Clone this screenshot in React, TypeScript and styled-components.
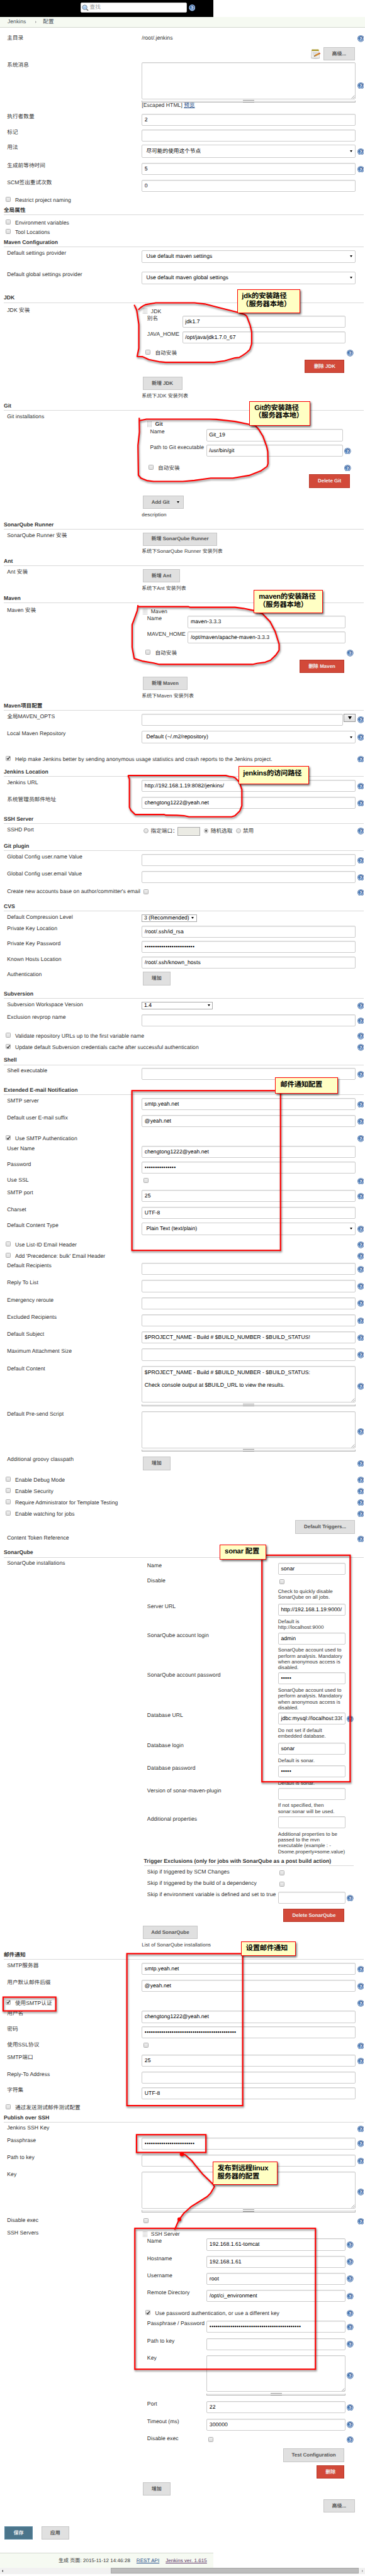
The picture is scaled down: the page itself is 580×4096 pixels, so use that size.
import React from "react";
import styled, { createGlobalStyle, css } from "styled-components";

const SCALE = 580 / 873;
const u = (n: number) => `${(n * SCALE).toFixed(3)}px`;

const Global = createGlobalStyle`
  * { box-sizing: border-box; }
  body {
    margin: 0;
    background: #fff;
    color: #333;
    font-family: "Liberation Sans", "Noto Sans CJK SC", sans-serif;
    font-size: ${u(13)};
    line-height: ${u(14)};
    letter-spacing: ${u(0.045)};
    text-rendering: geometricPrecision;
  }
`;

const Page = styled.div`
  position: relative;
  width: 580px;
  height: 4096px;
  overflow: hidden;
  background: #fff;
  white-space: nowrap;
`;

/* ---------- top bars ---------- */

const TopBar = styled.header`
  display: flex;
  align-items: flex-start;
  width: ${u(510)};
  height: ${u(40)};
  padding: ${u(6)} 0 0 ${u(192)};
  background: #000;
`;

const SearchBox = styled.div`
  display: flex;
  align-items: center;
  gap: ${u(3)};
  width: ${u(255)};
  height: ${u(24)};
  margin-right: ${u(4)};
  padding-left: ${u(2)};
  border: 1px solid #ccc;
  border-radius: ${u(3)};
  background: #fff;
  color: #999;
`;

const TopHelp = styled.div`
  padding-top: ${u(5)};
`;

const Crumbs = styled.nav`
  display: flex;
  align-items: center;
  height: ${u(26)};
  padding-left: ${u(18)};
  border-bottom: 1px solid #d3d7cf;
  background: #f6faf2;
  color: #4d545d;
`;

const CrumbArrow = styled.span`
  width: 0;
  height: 0;
  margin: 0 ${u(15.5)} 0 ${u(22)};
  border-left: ${u(4)} solid #aaa;
  border-top: ${u(4)} solid transparent;
  border-bottom: ${u(4)} solid transparent;
`;

/* ---------- form skeleton ---------- */

const Form = styled.main`
  width: ${u(870.5)};
  height: ${u(6044)};
  padding-top: ${u(18.5)};
`;

const Heading = styled.h2<{ $h?: number; $left?: number }>`
  height: ${(p) => u(p.$h ?? 27)};
  margin: 0 0 0 ${(p) => u(p.$left ?? 9)};
  font-size: ${u(13)};
  font-weight: bold;
  letter-spacing: ${u(0.03)};
  line-height: ${u(16)};
  &::after {
    content: "";
    display: block;
    height: 1px;
    margin-top: ${u(2.5)};
    background: #d9d9d9;
  }
`;

const RowBox = styled.div<{ $h: number }>`
  display: flex;
  align-items: flex-start;
  height: ${(p) => u(p.$h)};
`;

const Label = styled.div<{ $w: number; $pad: number }>`
  flex: none;
  width: ${(p) => u(p.$w)};
  padding-left: ${(p) => u(p.$pad)};
`;

const Control = styled.div`
  flex: 1;
  min-width: 0;
`;

const HelpCell = styled.div<{ $top: number }>`
  display: flex;
  justify-content: flex-end;
  flex: none;
  width: ${u(19.5)};
  padding-top: ${(p) => u(p.$top)};
`;

const CheckLine = styled.div<{ $h: number; $pad: number }>`
  display: flex;
  align-items: flex-start;
  height: ${(p) => u(p.$h)};
  padding-left: ${(p) => u(p.$pad)};
  line-height: ${u(16)};
`;

const CheckText = styled.span`
  flex: 1;
  padding-left: ${u(11)};
`;

const Group = styled.div<{ $w?: number; $top?: number }>`
  width: ${(p) => u(p.$w ?? 507)};
  padding-top: ${(p) => u(p.$top ?? 0)};
`;

const GroupTitle = styled.div<{ $pad?: number; $bold?: boolean; $h?: number }>`
  display: flex;
  align-items: center;
  gap: ${u(7)};
  height: ${(p) => u(p.$h ?? 20)};
  padding-left: ${(p) => u(p.$pad ?? 3)};
  font-weight: ${(p) => (p.$bold ? "bold" : "normal")};
`;

const DragHandle = styled.i`
  flex: none;
  width: 8px;
  height: 10px;
  background-image: linear-gradient(90deg, transparent 50%, #fff 50%), linear-gradient(#aaa 50%, #fff 50%);
  background-size: 2px 2px;
`;

/* ---------- controls ---------- */

const frame = css`
  border: 1px solid #ccc;
  border-radius: ${u(3)};
  background: #fff;
  color: #000;
`;

const Input = styled.div`
  ${frame}
  height: ${u(28.8)};
  padding: 0 ${u(5.5)};
  line-height: ${u(26)};
  box-shadow: inset 0 1px 1px rgba(0, 0, 0, 0.07);
`;

const InputText = styled.div`
  overflow: hidden;
`;

const Dots = styled.span`
  letter-spacing: ${u(0.43)};
`;

const SelectBox = styled.div`
  ${frame}
  display: flex;
  align-items: center;
  justify-content: space-between;
  height: ${u(30.5)};
  padding: 0 ${u(6.5)} 0 ${u(9.5)};
`;

const MiniSelect = styled.div<{ $w: number }>`
  display: flex;
  align-items: center;
  justify-content: space-between;
  width: ${(p) => u(p.$w)};
  height: ${u(19)};
  padding: 0 ${u(6)} 0 ${u(4)};
  border: 1px solid #a9a9a9;
  background: #fff;
  color: #000;
`;

const Caret = styled.i<{ $s?: number }>`
  width: 0;
  height: 0;
  border-top: ${(p) => u((p.$s ?? 1) * 6)} solid #000;
  border-left: ${(p) => u((p.$s ?? 1) * 3.4)} solid transparent;
  border-right: ${(p) => u((p.$s ?? 1) * 3.4)} solid transparent;
`;

const Area = styled.div`
  ${frame}
  position: relative;
  height: ${u(88.5)};
  padding: ${u(6)} ${u(5.5)};
  line-height: ${u(15.15)};
  white-space: pre;
  box-shadow: inset 0 1px 1px rgba(0, 0, 0, 0.07);
`;

const AreaCorner = styled.svg`
  position: absolute;
  right: 0;
  bottom: 0;
  width: ${u(9)};
  height: ${u(9)};
`;

const AreaBar = styled.div`
  display: flex;
  align-items: center;
  justify-content: center;
  height: ${u(5)};
  margin-top: ${u(3.5)};
  border-left: 1px solid #bbb;
  border-right: 1px solid #bbb;
  border-bottom: 1px solid #b3b3b3;
  background: #eee;
  &::after {
    content: "";
    width: ${u(27)};
    height: ${u(3)};
    border-top: 1px solid #999;
    border-bottom: 1px solid #888;
  }
`;

const tones = {
  plain: { bg: "#e0e0e0", line: "#c6c6c6", text: "#555" },
  danger: { bg: "#d24939", line: "#b9382a", text: "#eee" },
  primary: { bg: "#4b758b", line: "#5c8aa3", text: "#eee" },
};

const Button = styled.div<{ $w: number; $tone?: keyof typeof tones }>`
  display: flex;
  flex: none;
  align-items: center;
  justify-content: center;
  gap: ${u(18)};
  width: ${(p) => u(p.$w)};
  height: ${u(32)};
  border: 1px solid ${(p) => tones[p.$tone ?? "plain"].line};
  background: ${(p) => tones[p.$tone ?? "plain"].bg};
  color: ${(p) => tones[p.$tone ?? "plain"].text};
  font-size: ${u(12)};
  font-weight: bold;
  letter-spacing: ${u(-0.02)};
`;

const AddButton = styled(Button)`
  margin-left: ${u(2)};
`;

const MenuText = styled.span`
  padding-left: ${u(11)};
`;

const ButtonLine = styled.div<{ $h: number; $right: number }>`
  display: flex;
  justify-content: flex-end;
  gap: ${u(6)};
  height: ${(p) => u(p.$h)};
  padding-right: ${(p) => u(p.$right)};
`;

const NotepadSlot = styled.span`
  padding-top: ${u(5)};
`;

const Note = styled.div<{ $top?: number }>`
  padding-top: ${(p) => u(p.$top ?? 7)};
  font-size: ${u(12)};
  letter-spacing: ${u(0.09)};
  line-height: ${u(14.1)};
`;

const Box = styled.span<{ $indent?: boolean }>`
  position: relative;
  display: block;
  flex: none;
  width: ${u(12)};
  height: ${u(12)};
  margin: ${(p) => (p.$indent ? `${u(2.5)} 0 0 ${u(4)}` : "0")};
  border: 1px solid #b0b0b0;
  border-radius: ${u(2)};
  background: linear-gradient(#f0f0f0, #dcdcdc);
  svg {
    position: absolute;
    left: 0;
    top: ${u(-1)};
    width: ${u(10)};
    height: ${u(10)};
  }
`;

const Radio = styled.span<{ $on?: boolean }>`
  flex: none;
  width: ${u(12)};
  height: ${u(12)};
  margin-top: ${u(-4)};
  border: 1px solid #b0b0b0;
  border-radius: 50%;
  background: ${(p) =>
    p.$on
      ? "radial-gradient(circle, #555 38%, #e6e6e6 46%)"
      : "linear-gradient(#eee, #ddd)"};
`;

const RadioLine = styled.div`
  display: flex;
  align-items: center;
  height: ${u(22)};
  padding-left: ${u(4.5)};
`;

const RadioText = styled.span<{ $w: number }>`
  width: ${(p) => u(p.$w)};
  padding-left: ${u(5)};
`;

const PortField = styled.span`
  width: ${u(54)};
  height: ${u(21)};
  margin-right: ${u(9)};
  border: 1px solid #aaa;
  background: #ebebe4;
`;

const Combo = styled.div`
  display: flex;
  align-items: flex-start;
  gap: ${u(1)};
  > :first-child { flex: 1; }
`;

const ComboButton = styled.div`
  display: flex;
  align-items: center;
  justify-content: center;
  width: ${u(29)};
  height: ${u(20.5)};
  border: 1px solid #999;
  background: linear-gradient(#f4f4f4, #dedede);
`;

const Link = styled.a<{ $c?: string }>`
  color: ${(p) => p.$c ?? "#204a87"};
  text-decoration: underline;
`;

/* ---------- page bottom ---------- */

const SaveBar = styled.div`
  display: flex;
  gap: ${u(21)};
  padding: ${u(33)} 0 0 ${u(11)};
`;

const Footer = styled.footer`
  display: flex;
  align-items: center;
  justify-content: flex-end;
  gap: ${u(15)};
  width: ${u(510)};
  height: ${u(35)};
  padding-right: ${u(15)};
  border-top: 1px solid #d3d7cf;
  background: #f6faf2;
  font-size: ${u(12)};
  letter-spacing: ${u(0.12)};
`;

const Scrollbar = styled.div`
  display: flex;
  align-items: center;
  justify-content: space-between;
  height: ${u(16.2)};
  padding: 0 ${u(5)};
  background: #f1f1f1;
`;

const ScrollArrow = styled.i<{ $right?: boolean }>`
  width: 0;
  height: 0;
  border-top: ${u(4)} solid transparent;
  border-bottom: ${u(4)} solid transparent;
  ${(p) => (p.$right ? `border-left: ${u(4)} solid #a3a3a3;` : `border-right: ${u(4)} solid #404040;`)}
`;

const Thumb = styled.span`
  width: ${u(593)};
  height: ${u(13.5)};
  margin: 0 ${u(7)} 0 auto;
  border: 1px solid #a8a8a8;
  background: #bcbcbc;
`;

/* ---------- annotations floating above the form ---------- */

const Sketch = styled.svg`
  position: absolute;
  left: 0;
  top: 0;
  width: 580px;
  height: 4096px;
  pointer-events: none;
  filter: drop-shadow(1.5px 2px 1.5px rgba(0, 0, 0, 0.5));
`;

const Sticky = styled.div<{ $x: number; $y: number; $w: number; $h: number; $px: number; $py: number }>`
  position: absolute;
  left: ${(p) => u(p.$x)};
  top: ${(p) => u(p.$y)};
  width: ${(p) => u(p.$w)};
  height: ${(p) => u(p.$h)};
  padding: ${(p) => u(p.$py - 2.5)} 0 0 ${(p) => u(p.$px - 2.5)};
  border: ${u(3)} solid #f00;
  background: #ffffc4;
  box-shadow: 1.5px 2px 3px rgba(0, 0, 0, 0.6);
  color: #000;
  font-size: ${u(17)};
  font-weight: 600;
  letter-spacing: ${u(-0.28)};
  line-height: ${u(19)};
  white-space: pre;
`;

/* ---------- icons ---------- */

const IconSvg = styled.svg<{ $w: number; $h: number }>`
  display: block;
  flex: none;
  width: ${(p) => u(p.$w)};
  height: ${(p) => u(p.$h)};
`;

const HelpIcon = () => (
  <IconSvg $w={16} $h={16} viewBox="0 0 16 16">
    <circle cx="8" cy="8" r="8" fill="#3d68a3" />
    <circle cx="8" cy="8" r="6.4" fill="#5b87c0" stroke="#eef3f9" strokeWidth="1.1" />
    <path d="M2.200 8.500a5.900 5.900 0 0 1 11.600-1.600C10 6.500 6 8 2.200 8.500z" fill="#2c5794" />
    <text x="8" y="12" textAnchor="middle" fontSize="11" fontWeight="bold" fill="#fff" fontFamily="Liberation Sans" letterSpacing="0">?</text>
  </IconSvg>
);

const SearchIcon = () => (
  <IconSvg $w={16} $h={16} viewBox="0 0 16 16">
    <path d="M10.500 10.500l4 4" stroke="#777" strokeWidth="2.600" strokeLinecap="round" />
    <circle cx="7" cy="7" r="5.600" fill="#a9cbef" stroke="#7f8a94" strokeWidth="1.500" />
    <path d="M3.600 6.400a3.600 3.600 0 0 1 5-2.600C7.600 5.200 5.600 6 3.600 6.400z" fill="#dcecfb" />
  </IconSvg>
);

const NotepadIcon = () => (
  <IconSvg $w={23} $h={24} viewBox="0 0 23 24">
    <ellipse cx="11" cy="22" rx="10" ry="1.600" fill="#ccc" />
    <path d="M2 3h17l1.500 18.500H.8z" fill="#f1f1ef" stroke="#aaa" strokeWidth=".8" />
    <path d="M2 1h17v3.500H2z" fill="#b9a52e" />
    <path d="M4 1v3M7 1v3M10 1v3M13 1v3M16 1v3" stroke="#7e701c" strokeWidth=".9" />
    <path d="M4.500 8h12M4.500 11h9M4.500 14h5" stroke="#bbb" strokeWidth="1" />
    <path d="M7.500 17.500l3-3.500L20 9l2 2.400-9.800 5z" fill="#e8942c" stroke="#8c5511" strokeWidth=".7" />
    <path d="M19.600 9.200l1.400-.7 1.900 2.300-1.200.9z" fill="#d33" />
    <path d="M7.500 17.500l1.600-1.900 1.400 1.200z" fill="#222" />
  </IconSvg>
);

/* ---------- composed parts ---------- */

const Check = ({ on, indent }: { on?: boolean; indent?: boolean }) => (
  <Box $indent={indent}>
    {on && (
      <svg viewBox="0 0 10 10">
        <path d="M1.800 5.600l2.200 2.600L8.600 1.600" fill="none" stroke="#333" strokeWidth="2" />
      </svg>
    )}
  </Box>
);

type EntryProps = {
  h: number;
  label?: string;
  lw?: number;
  pad?: number;
  help?: number;
  children?: React.ReactNode;
};

const Entry = ({ h, label, lw = 339, pad = 17, help, children }: EntryProps) => (
  <RowBox $h={h}>
    <Label $w={lw} $pad={pad}>{label}</Label>
    <Control>{children}</Control>
    <HelpCell $top={help ?? 0}>{help !== undefined && <HelpIcon />}</HelpCell>
  </RowBox>
);

type TextProps = Omit<EntryProps, "help" | "children"> & {
  v?: string;
  dots?: number;
  help?: boolean;
  note?: React.ReactNode;
};

const Text = ({ v, dots, help, note, ...rest }: TextProps) => (
  <Entry {...rest} help={help ? 7 : undefined}>
    <Input>
      <InputText>{dots ? <Dots>{"•".repeat(dots)}</Dots> : v}</InputText>
    </Input>
    {note && <Note>{note}</Note>}
  </Entry>
);

const Select = ({ v, help, ...rest }: Omit<TextProps, "dots" | "note">) => (
  <Entry {...rest} help={help ? 8 : undefined}>
    <SelectBox>
      {v}
      <Caret />
    </SelectBox>
  </Entry>
);

const Textarea = ({ children }: { children?: React.ReactNode }) => (
  <>
    <Area>
      {children}
      <AreaCorner viewBox="0 0 9 9">
        <path d="M1 8.500L8 1M5 8.500L8.500 5" stroke="#777" strokeWidth="1" />
      </AreaCorner>
    </Area>
    <AreaBar />
  </>
);

type CheckRowProps = { h: number; on?: boolean; pad?: number; help?: boolean; children: string };

const CheckRow = ({ h, on, pad = 13, help, children }: CheckRowProps) => (
  <CheckLine $h={h} $pad={pad}>
    <Check on={on} />
    <CheckText>{children}</CheckText>
    {help && <HelpIcon />}
  </CheckLine>
);

const accountNote = (
  <>
    SonarQube account used to<br />perform analysis. Mandatory<br />when anonymous access is<br />disabled.
  </>
);

/* Label columns of the nested SonarQube and SSH server groups. */
const sonarCol = { lw: 326, pad: 13 };
const sshCol = { lw: 155, pad: 13 };

const loops = [
  "M321 729L327 742L332 776L332 833L328 852.500L341 853L356 860L380 865L396 866.500L512 866.500L537 863L562 856L572 855Q584 848 590 843L597.500 836L602 822L602 794L598 777L590 756L584.600 752L565 746L526 736.400L490 727L465 724.300L373 724.300L348 728.600Q337 733 331 741",
  "M333 999L333.500 1033L330 1065L331 1136.400L337 1143.600L351 1149.300L367.500 1151.400L437 1151.400L465 1149L504 1143.600L557 1143.600L596 1137L623.600 1126.400L638.700 1115.700L641 1108.600L640.400 1080L638 1068.600L629 1043.600L618 1025.700L611 1018.600L596 1015L562 1008L518 1003L501 1002.500L350 1002.500L333 1006.400",
  "M330 1447L328.500 1460L320 1483.600L316 1494L316 1548L321 1575L340 1581L367.500 1585.700L381 1589L604 1589L615 1586.400L634 1584L647 1579L660 1566.400L667.600 1555L667.600 1540.700L658 1510L646 1487L628 1468L606 1460L582 1455L562 1452.500L454 1452.500L451 1451L330 1451",
  "M306 1854.600L309.600 1863L309.600 1930.700L313 1938L323 1948L392.500 1948L396 1949.600L423 1950L440 1951L452 1953.600L554 1953.600L562 1951L573.500 1939.600L578.500 1927L578.500 1888L572 1870L562 1860L557 1858L548 1857L540 1854.600L306 1854.600",
  "M435 5152L443 5153.600L459 5168L468 5179.600L484 5199L509 5223.600L513 5229.600L504 5245L495.600 5253.600L456.600 5278L440 5293L429 5308L426 5313.600L417.600 5333",
];

const frames: [number, number, number, number][] = [
  [315.5, 2608.5, 355.5, 382],
  [626.5, 3719.5, 211, 542],
  [303.5, 4672.5, 277, 363.5],
  [7.5, 4776.5, 126, 33],
  [326.5, 5105.5, 166, 42.5],
  [322.5, 5329.5, 432, 337],
];

const stickies: [number, number, number, number, number, number, string][] = [
  [567, 693, 151, 56, 12.5, 8.5, "jdk的安装路径\n（服务器本地）"],
  [596, 960, 146, 59, 13.5, 8.5, "Git的安装路径\n（服务器本地）"],
  [607, 1412, 165, 55, 13, 8.5, "maven的安装路径\n（服务器本地）"],
  [570, 1834, 169, 43, 12.5, 9, "jenkins的访问路径"],
  [658, 2579, 151, 39, 13.5, 9, "邮件通知配置"],
  [525, 3696, 111, 37, 13.5, 9, "sonar 配置"],
  [576, 4646, 131, 35, 13, 9, "设置邮件通知"],
  [508, 5173, 156, 56, 13, 9, "发布到远程linux\n服务器的配置"],
];

export default function App() {
  return (
    <Page>
      <Global />
      <TopBar>
        <SearchBox>
          <SearchIcon />
          查找
        </SearchBox>
        <TopHelp>
          <HelpIcon />
        </TopHelp>
      </TopBar>
      <Crumbs>
        Jenkins
        <CrumbArrow />
        配置
      </Crumbs>

      <Form>
        <Entry h={28.5} label="主目录" help={0.5}>/root/.jenkins</Entry>
        <ButtonLine $h={36} $right={21.5}>
          <NotepadSlot>
            <NotepadIcon />
          </NotepadSlot>
          <Button $w={76}>高级...</Button>
        </ButtonLine>
        <Entry h={124} label="系统消息" help={48}>
          <Textarea />
          [Escaped HTML] <Link>预览</Link>
        </Entry>
        <Text h={37} label="执行者数量" v="2" />
        <Text h={37} label="标记" />
        <Select h={43} label="用法" v="尽可能的使用这个节点" help />
        <Text h={41} label="生成前等待时间" v="5" help />
        <Text h={40} label="SCM签出重试次数" v="0" />
        <CheckRow h={24}>Restrict project naming</CheckRow>

        <Heading $h={30}>全局属性</Heading>
        <CheckRow h={23}>Environment variables</CheckRow>
        <CheckRow h={24}>Tool Locations</CheckRow>

        <Heading>Maven Configuration</Heading>
        <Select h={51} label="Default settings provider" v="Use default maven settings" />
        <Select h={55} label="Default global settings provider" v="Use default maven global settings" />

        <Heading $h={31}>JDK</Heading>
        <Entry h={227.4} label="JDK 安装">
          <Group>
            <GroupTitle>
              <DragHandle />
              JDK
            </GroupTitle>
            <Text h={37} lw={97} pad={13} label="别名" v="jdk1.7" />
            <Text h={44} lw={97} pad={13} label="JAVA_HOME" v="/opt/java/jdk1.7.0_67" />
            <CheckRow h={24} pad={9} help>自动安装</CheckRow>
            <ButtonLine $h={41} $right={22}>
              <Button $w={95} $tone="danger">删除 JDK</Button>
            </ButtonLine>
          </Group>
          <AddButton $w={95}>新增 JDK</AddButton>
          <Note>系统下JDK 安装列表</Note>
        </Entry>

        <Heading>Git</Heading>
        <Entry h={257} label="Git installations">
          <Group $w={501} $top={14}>
            <GroupTitle $pad={13} $bold $h={23}>
              <DragHandle />
              Git
            </GroupTitle>
            <Text h={37} lw={154} pad={20} label="Name" v="Git_19" />
            <Text h={47.5} lw={154} pad={20} label="Path to Git executable" v="/usr/bin/git" help />
            <CheckRow h={24} pad={16} help>自动安装</CheckRow>
            <ButtonLine $h={50} $right={3}>
              <Button $w={98} $tone="danger">Delete Git</Button>
            </ButtonLine>
          </Group>
          <AddButton $w={99}>
            <MenuText>Add Git</MenuText>
            <Caret />
          </AddButton>
          <Note>description</Note>
        </Entry>

        <Heading>SonarQube Runner</Heading>
        <Entry h={61.2} label="SonarQube Runner 安装">
          <AddButton $w={179}>新增 SonarQube Runner</AddButton>
          <Note>系统下SonarQube Runner 安装列表</Note>
        </Entry>

        <Heading>Ant</Heading>
        <Entry h={60.8} label="Ant 安装">
          <AddButton $w={90}>新增 Ant</AddButton>
          <Note>系统下Ant 安装列表</Note>
        </Entry>

        <Heading $h={31}>Maven</Heading>
        <Entry h={226.9} label="Maven 安装">
          <Group>
            <GroupTitle>
              <DragHandle />
              Maven
            </GroupTitle>
            <Text h={37} lw={110} pad={13} label="Name" v="maven-3.3.3" />
            <Text h={43.6} lw={110} pad={13} label="MAVEN_HOME" v="/opt/maven/apache-maven-3.3.3" />
            <CheckRow h={24} pad={9} help>自动安装</CheckRow>
            <ButtonLine $h={41} $right={22}>
              <Button $w={108} $tone="danger">删除 Maven</Button>
            </ButtonLine>
          </Group>
          <AddButton $w={108}>新增 Maven</AddButton>
          <Note>系统下Maven 安装列表</Note>
        </Entry>

        <Heading>Maven项目配置</Heading>
        <Entry h={41} label="全局MAVEN_OPTS" help={7}>
          <Combo>
            <Input />
            <ComboButton>
              <Caret $s={1.4} />
            </ComboButton>
          </Combo>
        </Entry>
        <Select h={60} label="Local Maven Repository" v="Default (~/.m2/repository)" help />
        <CheckRow h={30.2} on help>
          Help make Jenkins better by sending anonymous usage statistics and crash reports to the Jenkins project.
        </CheckRow>

        <Heading>Jenkins Location</Heading>
        <Text h={41} label="Jenkins URL" v="http://192.168.1.19:8082/jenkins/" help />
        <Text h={44.8} label="系统管理员邮件地址" v="chengtong1222@yeah.net" help />

        <Heading>SSH Server</Heading>
        <Entry h={38} label="SSHD Port" help={2}>
          <RadioLine>
            <Radio />
            <RadioText $w={68.5}>指定端口：</RadioText>
            <PortField />
            <Radio $on />
            <RadioText $w={65}>随机选取</RadioText>
            <Radio />
            <RadioText $w={40}>禁用</RadioText>
          </RadioLine>
        </Entry>

        <Heading>Git plugin</Heading>
        <Text h={41} label="Global Config user.name Value" help />
        <Text h={41.2} label="Global Config user.email Value" help />
        <Entry h={34.8} label="Create new accounts base on author/committer's email" help={1.5}>
          <Check indent />
        </Entry>

        <Heading>CVS</Heading>
        <Entry h={27.2} label="Default Compression Level">
          <MiniSelect $w={132.5}>
            3 (Recommended)
            <Caret />
          </MiniSelect>
        </Entry>
        <Text h={37} label="Private Key Location" v="/root/.ssh/id_rsa" />
        <Text h={37} label="Private Key Password" dots={24} />
        <Text h={37} label="Known Hosts Location" v="/root/.ssh/known_hosts" />
        <Entry h={44} label="Authentication">
          <AddButton $w={67}>增加</AddButton>
        </Entry>

        <Heading>Subversion</Heading>
        <Entry h={31} label="Subversion Workspace Version" help={2}>
          <MiniSelect $w={170.5}>
            1.4
            <Caret />
          </MiniSelect>
        </Entry>
        <Text h={44} label="Exclusion revprop name" help />
        <CheckRow h={27.2} help>Validate repository URLs up to the first variable name</CheckRow>
        <CheckRow h={30} on help>Update default Subversion credentials cache after successful authentication</CheckRow>

        <Heading>Shell</Heading>
        <Text h={44.7} label="Shell executable" help />

        <Heading>Extended E-mail Notification</Heading>
        <Text h={41} label="SMTP server" v="smtp.yeah.net" help />
        <Text h={48.4} label="Default user E-mail suffix" v="@yeah.net" help />
        <CheckRow h={25.6} on help>Use SMTP Authentication</CheckRow>
        <Text h={37} label="User Name" v="chengtong1222@yeah.net" />
        <Text h={37.2} label="Password" dots={15} />
        <Entry h={30.8} label="Use SSL" help={1.5}>
          <Check indent />
        </Entry>
        <Text h={41} label="SMTP port" v="25" help />
        <Text h={37} label="Charset" v="UTF-8" />
        <Select h={46} label="Default Content Type" v="Plain Text (text/plain)" help />
        <CheckRow h={27} help>Use List-ID Email Header</CheckRow>
        <CheckRow h={24} help>Add 'Precedence: bulk' Email Header</CheckRow>
        <Text h={41} label="Default Recipients" help />
        <Text h={41} label="Reply To List" help />
        <Text h={41} label="Emergency reroute" help />
        <Text h={41} label="Excluded Recipients" help />
        <Text h={41} label="Default Subject" v="$PROJECT_NAME - Build # $BUILD_NUMBER - $BUILD_STATUS!" help />
        <Text h={41} label="Maximum Attachment Size" help />
        <Entry h={109} label="Default Content" help={41}>
          <Textarea>
            {"$PROJECT_NAME - Build # $BUILD_NUMBER - $BUILD_STATUS:\n\nCheck console output at $BUILD_URL to view the results."}
          </Textarea>
        </Entry>
        <Entry h={109} label="Default Pre-send Script" help={41}>
          <Textarea />
        </Entry>
        <Entry h={47.2} label="Additional groovy classpath" help={8}>
          <AddButton $w={67}>增加</AddButton>
        </Entry>
        <CheckRow h={27} help>Enable Debug Mode</CheckRow>
        <CheckRow h={27} help>Enable Security</CheckRow>
        <CheckRow h={27} help>Require Administrator for Template Testing</CheckRow>
        <CheckRow h={23.6} help>Enable watching for jobs</CheckRow>
        <ButtonLine $h={36.4} $right={21.5}>
          <Button $w={143}>Default Triggers...</Button>
        </ButtonLine>
        <Entry h={33} label="Content Token Reference" help={0.5} />

        <Heading>SonarQube</Heading>
        <Entry h={935.9} label="SonarQube installations">
          <Group $top={4.8}>
            <Text h={37.3} {...sonarCol} label="Name" v="sonar" />
            <Entry h={61.7} {...sonarCol} label="Disable">
              <Check indent />
              <Note $top={10.5}>Check to quickly disable<br />SonarQube on all jobs.</Note>
            </Entry>
            <Text
              h={68.2}
              {...sonarCol}
              label="Server URL"
              v="http://192.168.1.19:9000/"
              note={<>Default is<br />http://localhost:9000</>}
            />
            <Text h={95.7} {...sonarCol} label="SonarQube account login" v="admin" note={accountNote} />
            <Text h={96.1} {...sonarCol} label="SonarQube account password" dots={5} note={accountNote} />
            <Text
              h={72.1}
              {...sonarCol}
              label="Database URL"
              v="jdbc:mysql://localhost:330"
              help
              note={<>Do not set if default<br />embedded database.</>}
            />
            <Text h={54} {...sonarCol} label="Database login" v="sonar" note="Default is sonar." />
            <Text h={53.9} {...sonarCol} label="Database password" dots={5} note="Default is sonar." />
            <Text
              h={68.2}
              {...sonarCol}
              label="Version of sonar-maven-plugin"
              note={<>If not specified, then<br />sonar:sonar will be used.</>}
            />
            <Text
              h={99.9}
              {...sonarCol}
              label="Additional properties"
              note={<>Additional properties to be<br />passed to the mvn<br />executable (example : -<br />Dsome.property=some.value)</>}
            />
            <Heading $left={5} $h={27.4}>Trigger Exclusions (only for jobs with SonarQube as a post build action)</Heading>
            <Entry h={26.8} {...sonarCol} label="Skip if triggered by SCM Changes">
              <Check indent />
            </Entry>
            <Entry h={27} {...sonarCol} label="Skip if triggered by the build of a dependency">
              <Check indent />
            </Entry>
            <Text h={40.4} {...sonarCol} label="Skip if environment variable is defined and set to true" help />
            <ButtonLine $h={41} $right={22}>
              <Button $w={146} $tone="danger">Delete SonarQube</Button>
            </ButtonLine>
          </Group>
          <AddButton $w={132}>Add SonarQube</AddButton>
          <Note>List of SonarQube installations</Note>
        </Entry>

        <Heading>邮件通知</Heading>
        <Text h={41} label="SMTP服务器" v="smtp.yeah.net" help />
        <Text h={47.7} label="用户默认邮件后缀" v="@yeah.net" help />
        <CheckRow h={26.2} on help>使用SMTP认证</CheckRow>
        <Text h={37} label="用户名" v="chengtong1222@yeah.net" />
        <Text h={37} label="密码" dots={44} />
        <Entry h={31} label="使用SSL协议" help={1.5}>
          <Check indent />
        </Entry>
        <Text h={41} label="SMTP端口" v="25" help />
        <Text h={36.9} label="Reply-To Address" />
        <Text h={40.2} label="字符集" v="UTF-8" />
        <CheckRow h={24}>通过发送测试邮件测试配置</CheckRow>

        <Heading>Publish over SSH</Heading>
        <Entry h={28.9} label="Jenkins SSH Key" help={0.5} />
        <Text h={41} label="Passphrase" dots={24} help />
        <Text h={41} label="Path to key" help />
        <Entry h={109.3} label="Key" help={41}>
          <Textarea />
        </Entry>
        <Entry h={31} label="Disable exec" help={1.5}>
          <Check indent />
        </Entry>
        <Entry h={643.5} label="SSH Servers">
          <Group>
            <GroupTitle $h={19.7}>
              <DragHandle />
              SSH Server
            </GroupTitle>
            <Text h={41} {...sshCol} label="Name" v="192.168.1.61-tomcat" help />
            <Text h={41} {...sshCol} label="Hostname" v="192.168.1.61" help />
            <Text h={41.1} {...sshCol} label="Username" v="root" help />
            <Text h={48.4} {...sshCol} label="Remote Directory" v="/opt/ci_environment" help />
            <CheckRow h={25.5} pad={9} on help>Use password authentication, or use a different key</CheckRow>
            <Text h={41.2} {...sshCol} label="Passphrase / Password" dots={44} help />
            <Text h={40.8} {...sshCol} label="Path to key" help />
            <Entry h={110.7} {...sshCol} label="Key" help={41}>
              <Textarea />
            </Entry>
            <Text h={41.2} {...sshCol} label="Port" v="22" help />
            <Text h={41.5} {...sshCol} label="Timeout (ms)" v="300000" help />
            <Entry h={30.3} {...sshCol} label="Disable exec" help={1}>
              <Check indent />
            </Entry>
            <ButtonLine $h={40} $right={22}>
              <Button $w={147}>Test Configuration</Button>
            </ButtonLine>
            <ButtonLine $h={41} $right={22}>
              <Button $w={67} $tone="danger">删除</Button>
            </ButtonLine>
          </Group>
          <AddButton $w={67}>增加</AddButton>
        </Entry>
        <ButtonLine $h={32} $right={21.5}>
          <Button $w={76}>高级...</Button>
        </ButtonLine>
        <SaveBar>
          <Button $w={67} $tone="primary">保存</Button>
          <Button $w={66}>应用</Button>
        </SaveBar>
      </Form>

      <Footer>
        <span>生成 页面: 2015-11-12 14:46:28</span>
        <Link>REST API</Link>
        <Link $c="#5c3566">Jenkins ver. 1.615</Link>
      </Footer>
      <Scrollbar>
        <ScrollArrow />
        <Thumb />
        <ScrollArrow $right />
      </Scrollbar>

      <Sketch viewBox="0 0 873 6161" preserveAspectRatio="none" fill="none" stroke="#f00" strokeWidth="3.200" strokeLinejoin="round">
        {loops.map((d) => (
          <path key={d} d={d} />
        ))}
        {frames.map(([x, y, w, h]) => (
          <rect key={y} x={x} y={y} width={w} height={h} strokeLinejoin="miter" />
        ))}
        <circle cx="435" cy="5152" r="3.500" fill="#f00" />
        <circle cx="429" cy="5308" r="3" fill="#f00" />
      </Sketch>
      {stickies.map(([x, y, w, h, px, py, text]) => (
        <Sticky key={y} $x={x} $y={y} $w={w} $h={h} $px={px} $py={py}>{text}</Sticky>
      ))}
    </Page>
  );
}
